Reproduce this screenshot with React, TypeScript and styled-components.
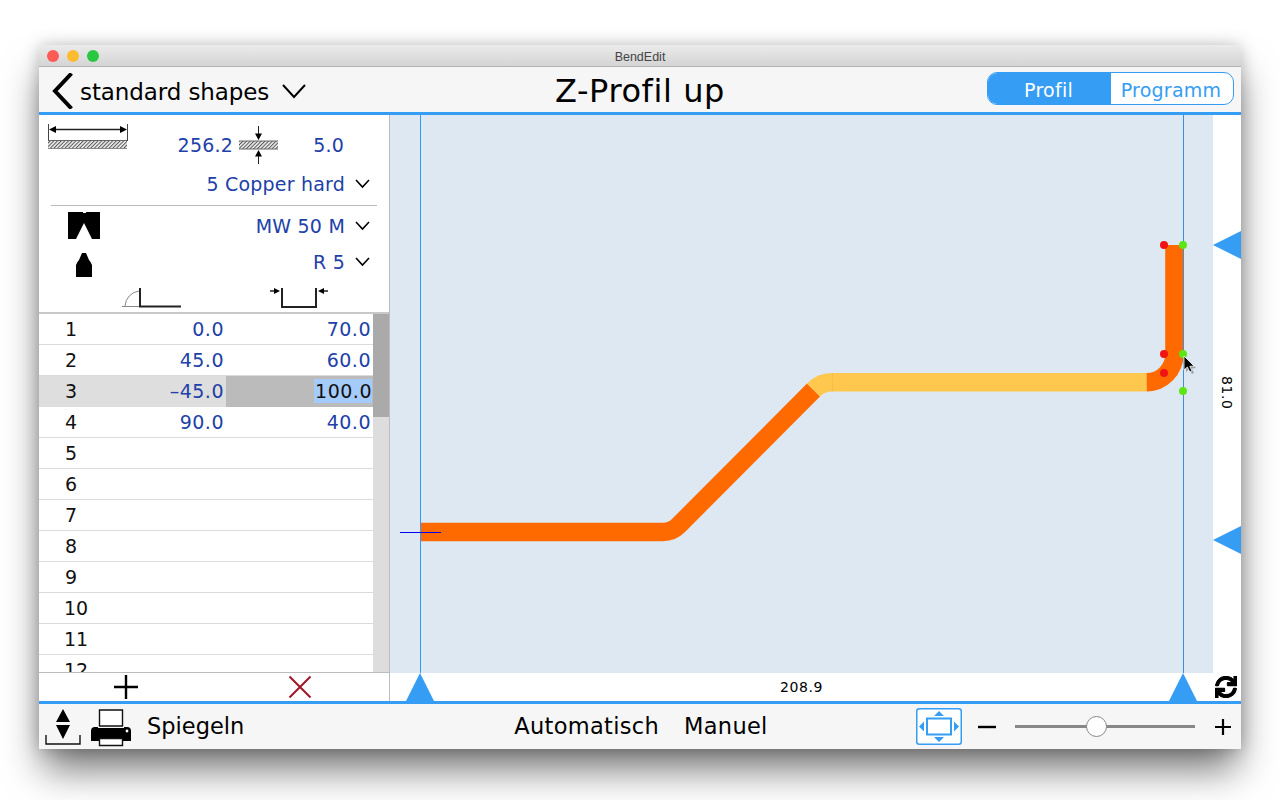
import React from 'react';
import styled, { createGlobalStyle } from 'styled-components';
import { FaSync } from 'react-icons/fa';

const GlobalStyle = createGlobalStyle`
	html, body {
		margin: 0;
		background: #fff;
		height: 100%;
		overflow: hidden;
	}
	body {
		font-family: 'DejaVu Sans', 'Liberation Sans', sans-serif;
		color: #000;
	}
`;

const BLUE = '#369df5';
const INK = '#2140a8';

const Page = styled.div`
	width: 1280px;
	height: 800px;
	padding: 45px 39px 0;
	box-sizing: border-box;
`;

const Win = styled.div`
	width: 1202px;
	height: 704px;
	display: flex;
	flex-direction: column;
	border-radius: 5px 5px 0 0;
	background: #f6f6f6;
	box-shadow: 0 24px 38px -4px rgba(0, 0, 0, 0.55), 0 0 16px rgba(0, 0, 0, 0.22);
	overflow: hidden;
`;

const TitleBar = styled.div`
	height: 22px;
	box-sizing: border-box;
	flex: none;
	display: flex;
	align-items: center;
	position: relative;
	justify-content: center;
	padding-top: 2px;
	font-size: 12.5px;
	font-family: 'Liberation Sans', sans-serif;
	color: #444;
	background: linear-gradient(#ebebeb, #d4d4d4);
	border-bottom: 1px solid #b4b4b4;
`;

const Lights = styled.div`
	position: absolute;
	left: 8px;
	top: 5px;
	display: flex;
	gap: 8px;
`;

const Light = styled.span<{ $c: string }>`
	width: 12px;
	height: 12px;
	border-radius: 50%;
	background: ${(p) => p.$c};
`;

const Toolbar = styled.div`
	height: 48px;
	flex: none;
	box-sizing: border-box;
	display: grid;
	grid-template-columns: 1fr auto 1fr;
	align-items: center;
	background: #f6f6f6;
	border-bottom: 3px solid ${BLUE};
	padding: 0 7px 0 13px;
`;

const BackGroup = styled.div`
	display: flex;
	align-items: center;
`;

const BackArrow = styled.svg`
	margin-top: 2px;
`;

const ShapesLabel = styled.span`
	font-size: 23px;
	margin: 4px 13px 0 6px;
	letter-spacing: -0.1px;
`;

const ShapesChevron = styled.span`
	margin-top: 3px;
	line-height: 0;
`;

const Title = styled.div`
	font-size: 32px;
	letter-spacing: 0.6px;
	margin: 3px 0 0 -6px;
`;

const Segment = styled.div`
	justify-self: end;
	display: flex;
	width: 247px;
	height: 33px;
	margin-top: -3px;
	box-sizing: border-box;
	border: 1px solid ${BLUE};
	border-radius: 10px;
	overflow: hidden;
	background: #fff;
`;

const SegmentItem = styled.div<{ $on?: boolean }>`
	flex: ${(p) => (p.$on ? '0 0 123px' : '1')};
	display: flex;
	align-items: center;
	justify-content: center;
	padding: 4px 2px 0 0;
	box-sizing: border-box;
	font-size: 19px;
	letter-spacing: 0.25px;
	color: ${(p) => (p.$on ? '#fff' : BLUE)};
	background: ${(p) => (p.$on ? BLUE : 'transparent')};
`;

const Main = styled.div`
	flex: 1;
	min-height: 0;
	display: grid;
	grid-template-columns: 351px 1fr;
	background: #fff;
`;

const Left = styled.div`
	display: flex;
	flex-direction: column;
	min-height: 0;
	border-right: 1px solid #bdbdbd;
	background: #fff;
`;

const Setup = styled.div`
	height: 199px;
	flex: none;
	box-sizing: border-box;
	border-bottom: 2px solid #c8c8c8;
	color: ${INK};
	font-size: 19px;
	letter-spacing: 0.2px;
`;

const SheetRow = styled.div`
	height: 52px;
	display: flex;
	align-items: flex-start;
	padding: 9px 0 0 9px;
	box-sizing: border-box;
`;

const Value = styled.span<{ $w: number }>`
	width: ${(p) => p.$w}px;
	text-align: right;
	flex: none;
	line-height: 22px;
	margin-top: 10px;
`;

const ThickIcon = styled.div`
	margin: 2px 0 0 6px;
	line-height: 0;
`;

const CopperRow = styled.div`
	height: 39px;
	display: flex;
	align-items: center;
	justify-content: flex-end;
	gap: 10px;
	margin: 0 12px;
	padding: 0 7px 5px 0;
	border-bottom: 1px solid #bbb;
	box-sizing: border-box;
`;

const ToolRow = styled.div<{ $h: number }>`
	height: ${(p) => p.$h}px;
	display: flex;
	align-items: center;
	padding: 0 19px 0 29px;
`;

const ToolIcon = styled.div<{ $drop?: number }>`
	width: 32px;
	line-height: 0;
	flex: none;
	display: flex;
	justify-content: center;
	margin-top: ${(p) => p.$drop || 0}px;
`;

const Picker = styled.div`
	margin: 2px 0 0 auto;
	display: flex;
	align-items: center;
	gap: 10px;
`;

const HeaderIcons = styled.div`
	display: flex;
	height: 31px;
	padding-left: 82px;
	gap: 88px;
	align-items: flex-end;
	line-height: 0;
`;

const TableWrap = styled.div`
	flex: 1;
	min-height: 0;
	display: flex;
	background: #fff;
`;

const Rows = styled.div`
	flex: 1;
	min-width: 0;
	overflow: hidden;
`;

const Row = styled.div<{ $sel?: boolean }>`
	height: 31px;
	box-sizing: border-box;
	display: grid;
	grid-template-columns: 187px 147px;
	border-bottom: 1px solid #dcdcdc;
	background: ${(p) => (p.$sel ? '#dedede' : '#fff')};
	font-size: 19px;
	letter-spacing: 0.5px;
	line-height: 31px;
`;

const Angle = styled.div`
	display: flex;
	justify-content: space-between;
	padding: 0 2px 0 25px;
	color: ${INK};
`;

const Num = styled.span`
	color: #111;
	width: 14px;
	text-align: center;
	letter-spacing: 0;
`;

const Len = styled.div<{ $sel?: boolean }>`
	text-align: right;
	padding-right: 2px;
	color: ${INK};
	background: ${(p) => (p.$sel ? '#bbb' : 'transparent')};
`;

const Marked = styled.span`
	background: #a5cbfb;
	color: #111;
	display: inline-block;
	line-height: 24px;
	margin-right: -1px;
	padding-left: 1px;
`;

const ScrollTrack = styled.div`
	width: 16px;
	flex: none;
	background: #ddd;
`;

const ScrollThumb = styled.div`
	height: 103px;
	background: #aaa;
`;

const RowActions = styled.div`
	height: 29px;
	flex: none;
	border-top: 1px solid #bbb;
	display: grid;
	grid-template-columns: 174px 174px;
	align-items: center;
	justify-items: center;
	line-height: 0;
	box-sizing: border-box;
`;

const Right = styled.div`
	display: grid;
	grid-template-columns: 823px 28px;
	grid-template-rows: 558px 28px;
	min-height: 0;
`;

const Canvas = styled.div`
	position: relative;
	background: #dee8f3;
	overflow: hidden;
`;

const Drawing = styled.svg`
	position: absolute;
	inset: 0;
	overflow: hidden;
`;

const SideRuler = styled.div`
	display: flex;
	flex-direction: column;
	align-items: flex-end;
	justify-content: space-between;
	padding: 116px 0 119px;
	box-sizing: border-box;
	line-height: 0;
`;

const SideValue = styled.span`
	writing-mode: vertical-rl;
	font-size: 14px;
	line-height: 14px;
	margin-right: 7px;
	letter-spacing: 0.6px;
`;

const BottomRuler = styled.div`
	display: flex;
	align-items: flex-end;
	justify-content: space-between;
	padding: 0 16px;
	line-height: 0;
`;

const BottomValue = styled.span`
	font-size: 14px;
	line-height: 28px;
	letter-spacing: 0.6px;
`;

const Corner = styled.div`
	display: flex;
	align-items: center;
	justify-content: center;
	font-size: 22px;
	padding-right: 2px;
	line-height: 0;

	svg {
		stroke: currentColor;
		stroke-width: 24;
	}
`;

const BottomBar = styled.div`
	height: 48px;
	flex: none;
	box-sizing: border-box;
	display: grid;
	grid-template-columns: 1fr auto 1fr;
	align-items: center;
	background: #f6f6f6;
	border-top: 3px solid ${BLUE};
	padding: 0 9px 0 6px;
`;

const BarLeft = styled.div`
	display: flex;
	align-items: center;
	line-height: 0;
`;

const BarLabel = styled.span<{ $spread?: boolean }>`
	font-size: 22.5px;
	line-height: 30px;
	margin-bottom: 2px;
	letter-spacing: ${(p) => (p.$spread ? '0.3px' : '0')};
`;

const BarCenter = styled.div`
	display: flex;
	gap: 25px;
	margin-left: 5px;
`;

const BarRight = styled.div`
	display: flex;
	justify-self: end;
	align-items: center;
	line-height: 0;
`;

const MinusMark = styled.svg`
	margin-left: 16px;
`;

const SliderTrack = styled.div`
	width: 180px;
	height: 3px;
	background: #888;
	margin: 0 19px 1px;
	position: relative;
`;

const SliderThumb = styled.div`
	position: absolute;
	left: 71px;
	top: -9px;
	width: 21px;
	height: 21px;
	box-sizing: border-box;
	border-radius: 50%;
	background: #fff;
	border: 1px solid #888;
`;

const StepSvg = styled.svg`
	margin-right: 10px;
`;

const PrinterSvg = styled.svg`
	margin: 2px 16px 0 0;
`;

const Chevron = ({ w = 15, h = 8, sw = 1.6 }: { w?: number; h?: number; sw?: number }) => (
	<svg width={w} height={h + 2} viewBox={`0 0 ${w} ${h + 2}`}>
		<path d={`M1 1 L${w / 2} ${h} L${w - 1} 1`} fill="none" stroke="#000" strokeWidth={sw} />
	</svg>
);

const Hatch = ({ id }: { id: string }) => (
	<pattern id={id} width="2.6" height="2.6" patternUnits="userSpaceOnUse" patternTransform="rotate(45)">
		<rect width="2.6" height="2.6" fill="#eee" />
		<rect width="1" height="2.6" fill="#555" />
	</pattern>
);

const LengthIcon = () => (
	<svg width="80" height="26" viewBox="0 0 80 26">
		<defs>
			<Hatch id="h1" />
		</defs>
		<path d="M0.5 0 V17 M79.5 0 V17" stroke="#444" />
		<path d="M3 5.5 H77" stroke="#222" strokeWidth="1.4" />
		<path d="M1 5.5 L8 2 V9 Z M79 5.5 L72 2 V9 Z" fill="#000" />
		<rect x="0" y="16.5" width="79" height="8" fill="url(#h1)" />
		<path d="M0 16.5 H79" stroke="#666" />
		<path d="M0 24.5 H79" stroke="#888" />
	</svg>
);

const ThicknessIcon = () => (
	<svg width="40" height="38" viewBox="0 0 40 38">
		<defs>
			<Hatch id="h2" />
		</defs>
		<rect x="0" y="15" width="39" height="8" fill="url(#h2)" />
		<path d="M0 15 H39 M0 23 H39" stroke="#666" />
		<path d="M19.5 0 V12 M19.5 26 V38" stroke="#222" />
		<path d="M19.5 14 L16 7.5 H23 Z M19.5 24 L16 30.5 H23 Z" fill="#000" />
	</svg>
);

const DieIcon = () => (
	<svg width="32" height="29" viewBox="0 0 32 29">
		<path d="M0 1 H15 V2 H18 V1 H32 V28 H24 L16 12 L8 28 H0 Z" fill="#000" />
	</svg>
);

const PunchIcon = () => (
	<svg width="16" height="24" viewBox="0 0 16 24">
		<path d="M0 24 V12 Q1 9 3 7 L6 0 H10 L13 7 Q15 9 16 12 V24 Z" fill="#000" />
	</svg>
);

const AngleIcon = () => (
	<svg width="60" height="22" viewBox="0 0 60 22">
		<path d="M1 19.5 H19 M4 19 A16 16 0 0 1 18 4" fill="none" stroke="#888" />
		<path d="M19 1 V19.5 H60" fill="none" stroke="#222" strokeWidth="2" />
	</svg>
);

const WidthIcon = () => (
	<svg width="60" height="22" viewBox="0 0 60 22">
		<path d="M13 1 V20 H47 V1" fill="none" stroke="#222" strokeWidth="2" />
		<path d="M1 4 H6 M59 4 H53" stroke="#222" strokeWidth="1.5" />
		<path d="M11 4 L5 1 V7 Z M49 4 L55 1 V7 Z" fill="#000" />
	</svg>
);

const PlusIcon = ({ s = 26, sw = 2.4 }: { s?: number; sw?: number }) => (
	<svg width={s} height={s} viewBox={`0 0 ${s} ${s}`}>
		<path d={`M${s / 2} 1 V${s - 1} M1 ${s / 2} H${s - 1}`} stroke="#000" strokeWidth={sw} />
	</svg>
);

const CrossIcon = () => (
	<svg width="24" height="24" viewBox="0 0 24 24">
		<path d="M1.5 1.5 L22.5 22.5 M22.5 1.5 L1.5 22.5" stroke="#a01626" strokeWidth="2" />
	</svg>
);

const SideMarker = () => (
	<svg width="28" height="28" viewBox="0 0 28 28">
		<path d="M0 14 L28 0 V28 Z" fill={BLUE} />
	</svg>
);

const BottomMarker = () => (
	<svg width="28" height="28" viewBox="0 0 28 28">
		<path d="M14 0 L28 28 H0 Z" fill={BLUE} />
	</svg>
);

const StepIcon = () => (
	<StepSvg width="36" height="37" viewBox="0 0 36 37">
		<path d="M18 1 L25 14 H11 Z M18 31 L11 17 H25 Z" fill="#000" />
		<path d="M1 27 V36 H35 V27" fill="none" stroke="#111" strokeWidth="1.4" />
	</StepSvg>
);

const PrinterIcon = () => (
	<PrinterSvg width="40" height="38" viewBox="0 0 40 38">
		<path d="M8.5 1 H31.5 V17 H8.5 Z" fill="#fff" stroke="#111" strokeWidth="1.4" />
		<path d="M4 18 H7 V19 H33 V18 H36 Q40 18 40 22 V32 H0 V22 Q0 18 4 18 Z" fill="#000" />
		<circle cx="36" cy="22" r="1.4" fill="#fff" />
		<path d="M8.5 29.5 H31.5 V36.5 H8.5 Z" fill="#fff" stroke="#111" strokeWidth="1.4" />
	</PrinterSvg>
);

const FitIcon = () => (
	<svg width="46" height="37" viewBox="0 0 46 37">
		<rect x="0.75" y="0.75" width="44.5" height="35.5" rx="2.5" fill="#fff" stroke={BLUE} strokeWidth="1.5" />
		<rect x="11" y="10.5" width="24" height="16" fill="none" stroke={BLUE} strokeWidth="2" />
		<path d="M23 3 L28 8 H18 Z M23 34 L18 29 H28 Z M3 18.5 L8 13.5 V23.5 Z M43 18.5 L38 13.5 V23.5 Z" fill={BLUE} />
	</svg>
);

const rows: [string, string][] = [
	['0.0', '70.0'],
	['45.0', '60.0'],
	['–45.0', '100.0'],
	['90.0', '40.0'],
	['', ''],
	['', ''],
	['', ''],
	['', ''],
	['', ''],
	['', ''],
	['', ''],
	['', ''],
];

const dots: [number, number, string][] = [
	[1164, 245, '#f01414'],
	[1183, 245, '#5ce614'],
	[1164, 354, '#f01414'],
	[1183, 354, '#5ce614'],
	[1164, 373, '#f01414'],
	[1183, 391, '#5ce614'],
];

const App = () => {
	return (
		<Page>
			<GlobalStyle />
			<Win>
				<TitleBar>
					<Lights>
						<Light $c="#fc5b57" />
						<Light $c="#fdbc2f" />
						<Light $c="#2ac840" />
					</Lights>
					BendEdit
				</TitleBar>
				<Toolbar>
					<BackGroup>
						<BackArrow width="22" height="36" viewBox="0 0 22 36">
							<path d="M19.5 0.5 L3 18 L19.5 35.5" fill="none" stroke="#000" strokeWidth="4" />
						</BackArrow>
						<ShapesLabel>standard shapes</ShapesLabel>
						<ShapesChevron>
							<Chevron w={24} h={13} sw={2} />
						</ShapesChevron>
					</BackGroup>
					<Title>Z-Profil up</Title>
					<Segment>
						<SegmentItem $on>Profil</SegmentItem>
						<SegmentItem>Programm</SegmentItem>
					</Segment>
				</Toolbar>
				<Main>
					<Left>
						<Setup>
							<SheetRow>
								<LengthIcon />
								<Value $w={105}>256.2</Value>
								<ThickIcon>
									<ThicknessIcon />
								</ThickIcon>
								<Value $w={65}>5.0</Value>
							</SheetRow>
							<CopperRow>
								5 Copper hard
								<Chevron />
							</CopperRow>
							<ToolRow $h={38}>
								<ToolIcon>
									<DieIcon />
								</ToolIcon>
								<Picker>
									MW 50 M
									<Chevron />
								</Picker>
							</ToolRow>
							<ToolRow $h={34}>
								<ToolIcon $drop={8}>
									<PunchIcon />
								</ToolIcon>
								<Picker>
									R 5
									<Chevron />
								</Picker>
							</ToolRow>
							<HeaderIcons>
								<AngleIcon />
								<WidthIcon />
							</HeaderIcons>
						</Setup>
						<TableWrap>
							<Rows>
								{rows.map(([angle, len], i) => (
									<Row key={i} $sel={i === 2}>
										<Angle>
											<Num>{i + 1}</Num>
											<span>{angle}</span>
										</Angle>
										<Len $sel={i === 2}>{i === 2 ? <Marked>{len}</Marked> : len}</Len>
									</Row>
								))}
							</Rows>
							<ScrollTrack>
								<ScrollThumb />
							</ScrollTrack>
						</TableWrap>
						<RowActions>
							<PlusIcon />
							<CrossIcon />
						</RowActions>
					</Left>
					<Right>
						<Canvas>
							<Drawing width="823" height="558" viewBox="390 115 823 558">
								<path d="M420.5 115 V673" stroke="#2f9bfa" />
								<g fill="none" strokeWidth="18.4">
									<path d="M421 532 H663 A22 22 0 0 0 678.5 525.5 L813.5 390" stroke="#ff6a00" />
									<path d="M813.5 390 A26 26 0 0 1 832 382.3 H1146.7" stroke="#fec84e" />
									<path d="M1146.7 382.3 A28 28 0 0 0 1174.4 354 V245" stroke="#ff6a00" />
								</g>
								<path d="M832.5 373 V391.5" stroke="#fdbd45" />
								<path d="M400 532.5 H441" stroke="#0000f0" />
								<path d="M1183.5 115 V673" stroke="#3f8fd8" />
								{dots.map(([x, y, c]) => (
									<circle key={`${x}-${y}`} cx={x} cy={y} r="4" fill={c} />
								))}
								<path
									d="M1186 358 V372 L1189.4 369 L1191.8 374 L1194 373 L1191.8 368.4 L1196 368 Z"
									fill="#000"
									opacity="0.3"
								/>
								<path
									d="M1184 356 V370 L1187.4 367 L1189.8 372 L1192 371 L1189.8 366.4 L1194 366 Z"
									fill="#000"
									stroke="#fff"
									strokeWidth="0.8"
								/>
							</Drawing>
						</Canvas>
						<SideRuler>
							<SideMarker />
							<SideValue>81.0</SideValue>
							<SideMarker />
						</SideRuler>
						<BottomRuler>
							<BottomMarker />
							<BottomValue>208.9</BottomValue>
							<BottomMarker />
						</BottomRuler>
						<Corner>
							<FaSync />
						</Corner>
					</Right>
				</Main>
				<BottomBar>
					<BarLeft>
						<StepIcon />
						<PrinterIcon />
						<BarLabel>Spiegeln</BarLabel>
					</BarLeft>
					<BarCenter>
						<BarLabel $spread>Automatisch</BarLabel>
						<BarLabel $spread>Manuel</BarLabel>
					</BarCenter>
					<BarRight>
						<FitIcon />
						<MinusMark width="18" height="4" viewBox="0 0 18 4">
							<rect width="18" height="2.4" y="0.8" fill="#000" />
						</MinusMark>
						<SliderTrack>
							<SliderThumb />
						</SliderTrack>
						<PlusIcon s={18} sw={2.2} />
					</BarRight>
				</BottomBar>
			</Win>
		</Page>
	);
};

export default App;
